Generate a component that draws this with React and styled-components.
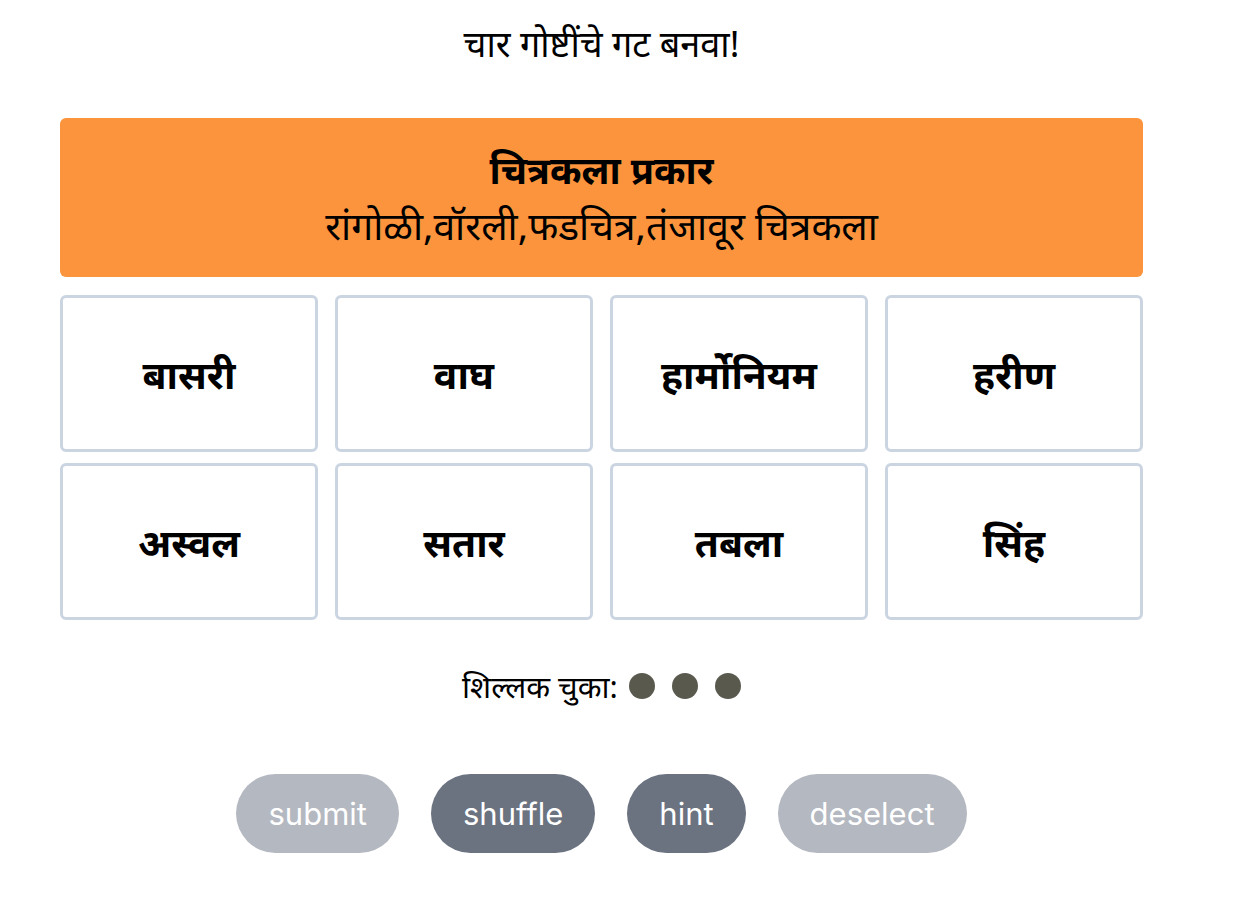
import React from 'react';
import styled, { createGlobalStyle } from 'styled-components';

const GlobalStyle = createGlobalStyle`
  body {
    margin: 0;
    background: #ffffff;
    font-family: "Noto Sans", "Noto Sans Devanagari", "Lato", sans-serif;
    color: #000;
  }
`;

const Page = styled.main`
  width: 1083px;
  padding: 22px 0 40px 60px;
  display: flex;
  flex-direction: column;
  align-items: center;
`;

const Heading = styled.h1`
  margin: 0;
  font-size: 36px;
  font-weight: 400;
  line-height: 44px;
  text-align: center;
`;

const Board = styled.section`
  width: 100%;
  margin-top: 52px;
  display: flex;
  flex-direction: column;
  gap: 18px;
`;

const Solved = styled.div`
  height: 159px;
  border-radius: 6px;
  background: ${({ bg }) => bg};
  display: flex;
  flex-direction: column;
  align-items: center;
  justify-content: center;
  text-align: center;
`;

const SolvedTitle = styled.div`
  font-size: 38px;
  font-weight: 700;
  line-height: 56px;
  margin-top: -2px;
`;

const SolvedItems = styled.div`
  font-size: 39px;
  line-height: 56px;
`;

const Grid = styled.div`
  display: grid;
  grid-template-columns: repeat(4, 1fr);
  column-gap: 17px;
  row-gap: 11px;
`;

const Tile = styled.button`
  height: 157px;
  box-sizing: border-box;
  border: 3px solid ${({ selected }) => (selected ? '#5a594e' : '#cbd5e1')};
  border-radius: 6px;
  background: ${({ selected }) => (selected ? '#efefe6' : '#ffffff')};
  font-family: inherit;
  font-size: 39px;
  font-weight: 700;
  color: #000;
  cursor: pointer;
  padding: 0;
`;

const Mistakes = styled.div`
  margin-top: 46px;
  display: flex;
  align-items: center;
  gap: 11px;
  font-size: 31px;
  line-height: 40px;
`;

const Dots = styled.div`
  display: flex;
  gap: 17px;
`;

const Dot = styled.span`
  width: 26px;
  height: 26px;
  border-radius: 50%;
  background: #5a594e;
`;

const Actions = styled.div`
  margin-top: 68px;
  display: flex;
  gap: 32px;
`;

const Action = styled.button`
  height: 79px;
  padding: 0 32px;
  border: none;
  border-radius: 9999px;
  background: ${({ disabled }) => (disabled ? '#b4b8c0' : '#6b7280')};
  color: #fff;
  font-family: "Inter", "Liberation Sans", sans-serif;
  font-size: 31px;
  cursor: ${({ disabled }) => (disabled ? 'default' : 'pointer')};
`;

const words = ['बासरी', 'वाघ', 'हार्मोनियम', 'हरीण', 'अस्वल', 'सतार', 'तबला', 'सिंह'];

export default function App() {
  return (
    <>
      <GlobalStyle />
      <Page>
        <Heading>चार गोष्टींचे गट बनवा!</Heading>
        <Board>
          <Solved bg="#fb943c">
            <SolvedTitle>चित्रकला प्रकार</SolvedTitle>
            <SolvedItems>रांगोळी,वॉरली,फडचित्र,तंजावूर चित्रकला</SolvedItems>
          </Solved>
          <Grid>
            {words.map((w) => (
              <Tile key={w}>{w}</Tile>
            ))}
          </Grid>
        </Board>
        <Mistakes>
          शिल्लक चुका:
          <Dots>
            <Dot />
            <Dot />
            <Dot />
          </Dots>
        </Mistakes>
        <Actions>
          <Action disabled>submit</Action>
          <Action>shuffle</Action>
          <Action>hint</Action>
          <Action disabled>deselect</Action>
        </Actions>
      </Page>
    </>
  );
}
